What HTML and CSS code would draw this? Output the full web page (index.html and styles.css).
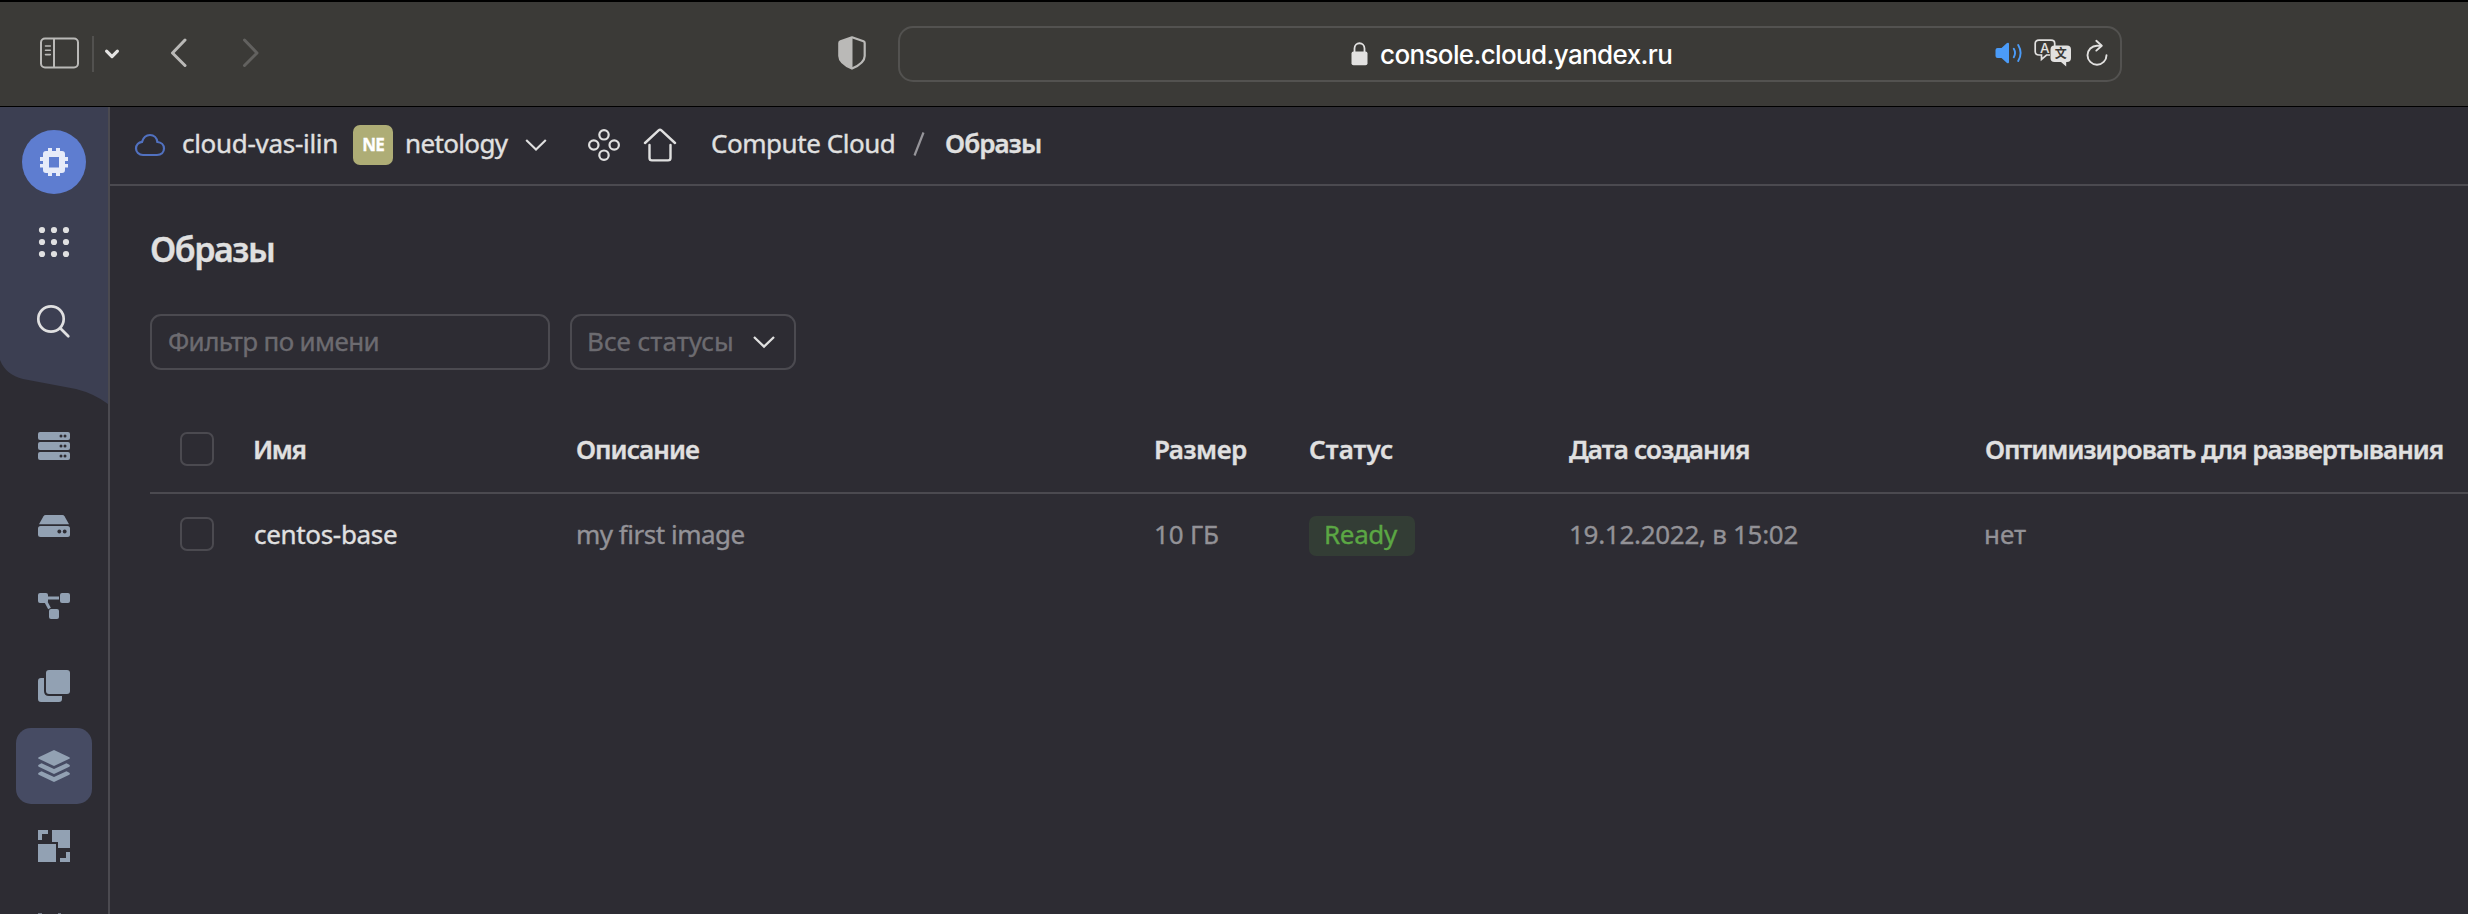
FILE: index.html
```html
<!DOCTYPE html>
<html lang="ru">
<head>
<meta charset="utf-8">
<title>Образы</title>
<link rel="stylesheet" href="styles.css">
</head>
<body>
<div class="browser-bar">
  <svg class="sidebar-toggle" width="40" height="32" viewBox="0 0 40 32" fill="none" stroke="#bab9b7" stroke-width="2"><rect x="1" y="1.5" width="37" height="29" rx="4"/><path d="M14 1.5V30.5"/><path d="M5.5 9h4.800M5.500 13.300h4.800M5.500 17.600h4.800" stroke-width="1.600" stroke-linecap="round"/></svg>
  <span class="bar-divider"></span>
  <svg class="tab-chevron" width="16" height="12" viewBox="0 0 16 12" fill="none" stroke="#e4e3e2" stroke-width="3.200" stroke-linecap="round" stroke-linejoin="round"><path d="M2.600 3.200L8 8.600L13.400 3.200"/></svg>
  <svg class="nav-back" width="18" height="30" viewBox="0 0 18 30" fill="none" stroke="#bab9b7" stroke-width="3" stroke-linecap="round" stroke-linejoin="round"><path d="M15 2L2.500 15L15 27.500"/></svg>
  <svg class="nav-forward" width="18" height="30" viewBox="0 0 18 30" fill="none" stroke="#62615f" stroke-width="3" stroke-linecap="round" stroke-linejoin="round"><path d="M2.500 2L15 15L2.500 27.500"/></svg>
  <svg class="shield" width="28" height="34" viewBox="0 0 28 34"><path d="M14 1.300L25.500 5.200Q26.700 5.700 26.700 7V20C26.700 26 20 30 14 32.600C8 30 1.300 26 1.300 20V7Q1.300 5.700 2.500 5.200Z" fill="none" stroke="#bab9b7" stroke-width="2.200" stroke-linejoin="round"/><path d="M14.500 1V32.500C8 30 1 26 1 20V6.500Q1 5.500 2.500 5Z" fill="#bab9b7"/></svg>
  <div class="address">
    <div class="address-text">
      <svg width="17" height="24" viewBox="0 0 17 24"><rect x="0.500" y="9.500" width="16" height="13.800" rx="2" fill="#e2e1e0"/><path d="M3.500 10.500V6.500C3.500 -0.500 13.500 -0.500 13.500 6.500V10.500" fill="none" stroke="#e2e1e0" stroke-width="1.800"/></svg>
      <span class="url">console.cloud.yandex.ru</span>
    </div>
    <div class="address-icons">
      <svg width="28" height="22" viewBox="0 0 28 22"><path d="M0.500 8Q0.500 6 2.500 6H6.500L12 1Q14 0 14 2V20Q14 22 12 21L6.500 16H2.500Q0.500 16 0.500 14Z" fill="#4b9bf8"/><path d="M18.800 6.800Q21.300 11 18.800 15.200M23.200 3Q28 11 23.200 19" fill="none" stroke="#4b9bf8" stroke-width="1.900" stroke-linecap="round"/></svg>
      <svg class="translate" width="38" height="28" viewBox="0 0 38 28"><path d="M16 16L12.500 16L7.500 20.300V16H5Q1.200 16 1.200 12.500V4.500Q1.200 1.200 5 1.200H17Q20.700 1.200 20.700 4.500V7" fill="none" stroke="#e2e1e0" stroke-width="1.700"/><text x="5.900" y="13.600" font-family="Inter, sans-serif" font-size="13.500" font-weight="500" fill="#e2e1e0">A</text><path d="M20.500 6.500H33Q37 6.500 37 10.500V19Q37 23 33 23H32.200V27.500L27 23H20.500Q16.500 23 16.500 19V10.500Q16.500 6.500 20.500 6.500Z" fill="#e2e1e0"/><text x="20.800" y="19.400" font-family="Noto Sans CJK SC, sans-serif" font-size="12" font-weight="700" fill="#3b3a37">文</text></svg>
      <svg class="reload" width="22" height="28" viewBox="0 0 22 28" fill="none" stroke="#e2e1e0" stroke-width="1.900" stroke-linecap="round" stroke-linejoin="round"><path d="M14.800 6.700H11A9.500 9.500 0 1 0 20.500 16.200"/><path d="M10.300 1.800L15.800 6.700L10.300 11.600"/></svg>
    </div>
  </div>
</div>
<div class="app">
  <nav class="sidebar">
    <svg class="wave" width="108" height="298" viewBox="0 0 108 298"><path d="M0 0H108V297Q94 286.500 76 282L23 272Q6 268 0 253Z" fill="#3c3f52"/></svg>
    <a class="item"><span class="logo"><svg width="28" height="28" viewBox="0 0 28 28"><path d="M8 0h4v3h4V0h4v3h2a3 3 0 0 1 3 3v3h3v4h-3v3h3v3.500h-3V22a3 3 0 0 1-3 3h-2v3h-4v-3h-4v3H8v-3H6a3 3 0 0 1-3-3v-2.500H0V16h3v-3H0V9h3V6a3 3 0 0 1 3-3h2zM9 9v10.500h10V9z" fill="#e6ebf9" fill-rule="evenodd"/></svg></span></a>
    <a class="item"><svg width="32" height="32" viewBox="0 0 32 32" fill="#e0e0e1"><circle cx="4" cy="4" r="3.100"/><circle cx="16" cy="4" r="3.100"/><circle cx="28" cy="4" r="3.100"/><circle cx="4" cy="16" r="3.100"/><circle cx="16" cy="16" r="3.100"/><circle cx="28" cy="16" r="3.100"/><circle cx="4" cy="28" r="3.100"/><circle cx="16" cy="28" r="3.100"/><circle cx="28" cy="28" r="3.100"/></svg></a>
    <a class="item"><svg width="36" height="36" viewBox="0 0 36 36" fill="none" stroke="#e0e0e1" stroke-width="2.700" stroke-linecap="round"><circle cx="15" cy="15" r="12.700"/><path d="M24.300 24.300L32.300 32.300"/></svg></a>
    <a class="item service-first"><svg width="32" height="28" viewBox="0 0 32 28"><g fill="#92a1b3"><rect width="32" height="8" rx="2"/><rect y="10" width="32" height="8" rx="2"/><rect y="20" width="32" height="8" rx="2"/></g><g fill="#2d2c33"><circle cx="23" cy="4" r="1.500"/><circle cx="27" cy="4" r="1.500"/><circle cx="23" cy="14" r="1.500"/><circle cx="27" cy="14" r="1.500"/><circle cx="23" cy="24" r="1.500"/><circle cx="27" cy="24" r="1.500"/></g></svg></a>
    <a class="item"><svg width="32" height="22" viewBox="0 0 32 22"><path d="M7.500 0H24.500Q25.700 0 26.500 1.200L31 9.300H1L5.500 1.200Q6.300 0 7.500 0Z" fill="#92a1b3"/><rect y="11" width="32" height="11" rx="2.500" fill="#92a1b3"/><circle cx="21.300" cy="16.500" r="1.900" fill="#2d2c33"/><circle cx="26.700" cy="16.500" r="1.900" fill="#2d2c33"/></svg></a>
    <a class="item"><svg width="32" height="26" viewBox="0 0 32 26" fill="#92a1b3"><rect width="10" height="10" rx="2"/><rect x="22" width="10" height="10" rx="2"/><rect x="11" y="16" width="10" height="10" rx="2"/><path d="M9 5H21M7.500 8L11.500 15.500" stroke="#92a1b3" stroke-width="3"/></svg></a>
    <a class="item"><svg width="32" height="32" viewBox="0 0 32 32" fill="#92a1b3"><rect x="8" width="24" height="24" rx="3"/><path d="M3 8H6V21Q6 26 11 26H24V29Q24 32 21 32H3Q0 32 0 29V11Q0 8 3 8Z"/></svg></a>
    <a class="item active"><svg width="32" height="32" viewBox="0 0 32 32" fill="#92a1b3"><path d="M16 0L31.300 7.200Q32.500 8 31.300 8.800L16 16L0.700 8.800Q-0.500 8 0.700 7.200Z"/><path d="M3.500 13.300L16 19L28.500 13.300L31.300 14.800Q32.500 15.800 31.300 16.800L16 24L0.700 16.800Q-0.500 15.800 0.700 14.800Z"/><path d="M3.500 21.300L16 27L28.500 21.300L31.300 22.800Q32.500 23.800 31.300 24.800L16 32L0.700 24.800Q-0.500 23.800 0.700 22.800Z"/></svg></a>
    <a class="item"><svg width="32" height="32" viewBox="0 0 32 32" fill="#92a1b3"><path d="M0 0H10V4H4V10H0ZM14 0H32V18H20V12H14ZM0 14H18V32H0ZM28 22H32V32H22V28H28Z"/></svg></a>
    <a class="item"><svg width="32" height="26" viewBox="0 0 32 26" fill="#747b88"><path d="M0 0H4V10H0ZM20 0H23V10H20Z"/></svg></a>
  </nav>
  <main class="content">
    <header class="header">
      <svg class="cloud" width="32" height="24" viewBox="0 0 32 24" fill="none" stroke="#5171c0" stroke-width="2.200"><path d="M9 22C4.800 22 2 19 2 15.600C2 12 4.600 9.400 8 8.900C9.300 4.600 12.300 2 16 2C20 2 22.900 5 23.400 9C27.200 9.300 30 12 30 15.600C30 19.200 27.200 22 23 22Z"/></svg>
      <span class="org">cloud-vas-ilin</span>
      <span class="badge">NE</span>
      <span class="folder">netology</span>
      <svg class="chevron" width="22" height="14" viewBox="0 0 22 14"><path d="M1.200 2L11 11.600L20.800 2" fill="none" stroke="#e0e0e0" stroke-width="2.100"/></svg>
      <svg class="dots" width="32" height="32" viewBox="0 0 32 32" fill="none" stroke="#e0e0e0" stroke-width="2.200"><circle cx="16" cy="5.800" r="4.700"/><circle cx="5.800" cy="16" r="4.700"/><circle cx="26.200" cy="16" r="4.700"/><circle cx="16" cy="26.200" r="4.700"/></svg>
      <svg class="home" width="34" height="34" viewBox="0 0 34 34" fill="none" stroke="#e0e0e0" stroke-width="2.400" stroke-linecap="round"><path d="M2 15L15.600 2.300Q17 1 18.400 2.300L32 15"/><path d="M6.500 17V30Q6.500 32.400 9 32.400H25Q27.500 32.400 27.500 30V17"/></svg>
      <span class="crumb">Compute Cloud</span>
      <svg class="slash" width="12" height="24" viewBox="0 0 12 24"><path d="M1.500 23.500L10.500 0.500" stroke="#96959a" stroke-width="2.200"/></svg>
      <span class="crumb-current">Образы</span>
    </header>
    <section class="page">
      <h1 class="title">Образы</h1>
      <div class="filters">
        <div class="input">Фильтр по имени</div>
        <div class="select"><span class="select-text">Все статусы</span><svg width="22" height="14" viewBox="0 0 22 14"><path d="M1 2L11 11.600L21 2" fill="none" stroke="#e0e0e0" stroke-width="2.300"/></svg></div>
      </div>
      <div class="table">
        <div class="row head">
          <span class="checkbox"></span>
          <span class="h-name">Имя</span>
          <span class="h-desc">Описание</span>
          <span class="h-size">Размер</span>
          <span class="h-status">Статус</span>
          <span class="h-date">Дата создания</span>
          <span class="h-opt">Оптимизировать для развертывания</span>
        </div>
        <div class="row">
          <span class="checkbox"></span>
          <span class="name">centos-base</span>
          <span class="desc">my first image</span>
          <span class="size">10 ГБ</span>
          <span><span class="status">Ready</span></span>
          <span class="date">19.12.2022, в 15:02</span>
          <span class="opt">нет</span>
        </div>
      </div>
    </section>
  </main>
</div>
</body>
</html>
```
FILE: styles.css
```css
* { box-sizing: border-box; }
body {
  margin: 0;
  width: 2468px;
  height: 914px;
  overflow: hidden;
  background: #2d2c33;
  color: #e0e0e0;
  font: 400 26px/36px "Noto Sans", sans-serif;
  white-space: nowrap;
}
svg { display: block; flex: none; }

/* Browser toolbar */
.browser-bar {
  display: flex;
  align-items: center;
  height: 107px;
  padding-left: 40px;
  background: #3b3a37;
  border-top: 2px solid #000;
  border-bottom: 1px solid #000;
}
.sidebar-toggle { margin-bottom: 2px; }
.bar-divider { width: 2px; height: 36px; margin: 0 11px 0 12px; background: #52514f; }
.tab-chevron { margin: 0 50px 0 -1px; }
.nav-back { margin-bottom: 2px; }
.nav-forward { margin: 0 0 2px 54px; }
.shield { margin: 0 32px 2px 578px; }
.address {
  display: flex;
  align-items: center;
  justify-content: space-between;
  width: 1224px;
  height: 56px;
  padding: 0 12px 0 451px;
  border: 2px solid #535250;
  border-radius: 15px;
}
.address-text { display: flex; align-items: center; gap: 12px; color: #fff; }
.url { padding-top: 2px; font: 500 26px/36px Inter, sans-serif; letter-spacing: -0.63px; }
.address-icons { display: flex; align-items: center; gap: 14px; margin-bottom: 2px; }
.translate { margin-left: -3px; }

/* Application shell */
.app { display: flex; height: 807px; }
.sidebar {
  position: relative;
  display: flex;
  flex: none;
  flex-direction: column;
  align-items: center;
  gap: 4px;
  width: 110px;
  padding-top: 17px;
  border-right: 2px solid #4b4a50;
  overflow: hidden;
}
.wave { position: absolute; left: 0; top: 0; }
.item {
  position: relative;
  display: flex;
  flex: none;
  align-items: center;
  justify-content: center;
  width: 76px;
  height: 76px;
  border-radius: 15px;
}
.service-first { margin-top: 44px; }
.active { background: #464b63; }
.logo {
  display: flex;
  align-items: center;
  justify-content: center;
  width: 64px;
  height: 64px;
  border-radius: 50%;
  background: #5e7dd0;
}
.content { flex: 1; min-width: 0; -webkit-text-stroke: 0.35px currentColor; }

/* Breadcrumb header */
.header {
  display: flex;
  align-items: center;
  height: 79px;
  padding: 0 0 2px 24px;
  border-bottom: 2px solid #4b4a50;
}
.org { width: 159px; margin-left: 16px; padding-bottom: 3px; letter-spacing: -0.3px; }
.badge {
  width: 40px;
  height: 40px;
  margin-left: 12px;
  border-radius: 7px;
  background: #aead76;
  color: #fff;
  font-size: 17px;
  font-weight: 700;
  line-height: 40px;
  letter-spacing: -0.8px;
  text-align: center;
}
.folder { width: 109px; margin-left: 12px; padding-bottom: 3px; letter-spacing: -0.65px; }
.chevron { margin-left: 11px; }
.dots { margin-left: 41px; }
.home { margin-left: 23px; }
.crumb { width: 190px; margin-left: 34px; padding-bottom: 3px; letter-spacing: -0.46px; }
.slash { margin: 0 0 2px 12px; }
.crumb-current { margin-left: 20px; padding-bottom: 3px; font-weight: 600; letter-spacing: -0.9px; }

/* Page */
.page { padding: 39px 0 0 40px; }
.title { margin: 0 0 41px; font-size: 34px; font-weight: 600; line-height: 48px; letter-spacing: -1.45px; }
.filters { display: flex; gap: 20px; color: #6c6b70; }
.input, .select {
  height: 56px;
  border: 2px solid #4b4a50;
  border-radius: 11px;
  line-height: 50px;
}
.input { width: 400px; padding-left: 16px; letter-spacing: -0.63px; }
.select { display: flex; align-items: center; justify-content: space-between; width: 226px; padding: 0 19px 0 15px; }
.select-text { padding-bottom: 3px; }

/* Table */
.table { margin-top: 36px; }
.row {
  display: grid;
  grid-template-columns: 74px 322px 578px 155px 260px 416px 1fr;
  align-items: center;
  height: 80px;
  padding-left: 30px;
  color: #939297;
}
.head {
  height: 88px;
  border-bottom: 2px solid #4b4a50;
  color: #e0e0e0;
  font-weight: 600;
}
.checkbox { width: 34px; height: 34px; border: 2px solid #4b4a50; border-radius: 7px; }
.h-name { margin-left: -1px; letter-spacing: -1.4px; }
.h-desc { letter-spacing: -0.94px; }
.h-size { letter-spacing: -0.51px; }
.h-status { letter-spacing: 0.1px; }
.h-date { letter-spacing: -0.85px; }
.h-opt { letter-spacing: -0.99px; }
.name { color: #e0e0e0; letter-spacing: -0.32px; }
.desc { letter-spacing: -0.49px; }
.size { letter-spacing: -0.18px; }
.status {
  display: block;
  width: 106px;
  height: 40px;
  margin-top: 3px;
  padding-left: 15px;
  border-radius: 7px;
  background: #333d35;
  color: #5ba744;
  line-height: 36px;
  letter-spacing: -0.35px;
}
.date { letter-spacing: -0.29px; }
.opt { margin-left: -1px; }
```
